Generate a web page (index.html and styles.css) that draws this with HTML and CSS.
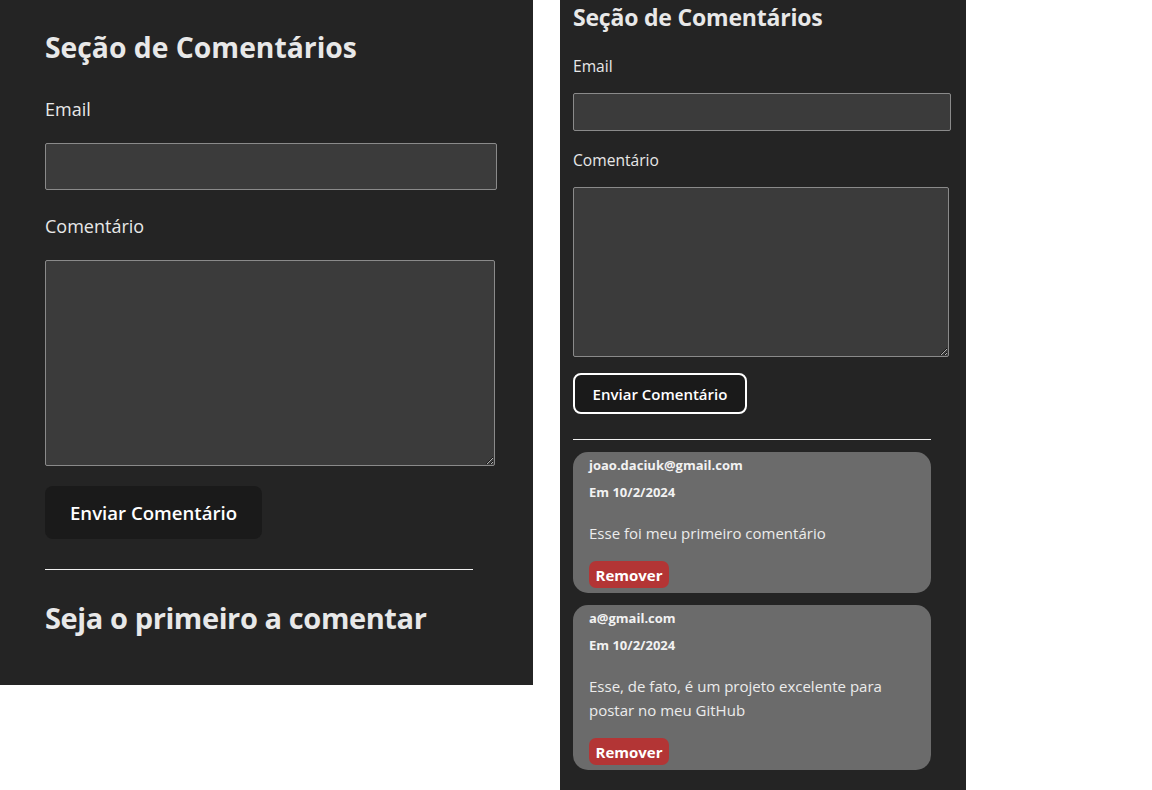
FILE: index.html
```html
<!DOCTYPE html>
<html lang="pt-BR">
<head>
<meta charset="utf-8">
<title>Comentários</title>
<link rel="stylesheet" href="styles.css">
</head>
<body>
<div class="page">
  <section class="panel panel-large">
    <h1 class="title">Seção de Comentários</h1>
    <label class="label label-email">Email</label>
    <input class="field field-email" type="email">
    <label class="label label-comment">Comentário</label>
    <textarea class="field field-text"></textarea>
    <button class="send">Enviar Comentário</button>
    <hr class="rule">
    <h2 class="empty">Seja o primeiro a comentar</h2>
  </section>

  <section class="panel panel-small">
    <h1 class="title">Seção de Comentários</h1>
    <label class="label label-email">Email</label>
    <input class="field field-email" type="email">
    <label class="label label-comment">Comentário</label>
    <textarea class="field field-text"></textarea>
    <button class="send">Enviar Comentário</button>
    <hr class="rule">
    <div class="list">
      <article class="card">
        <div class="author">joao.daciuk@gmail.com</div>
        <div class="date">Em 10/2/2024</div>
        <p class="body">Esse foi meu primeiro comentário</p>
        <button class="remove">Remover</button>
      </article>
      <article class="card">
        <div class="author">a@gmail.com</div>
        <div class="date">Em 10/2/2024</div>
        <p class="body">Esse, de fato, é um projeto excelente para postar no meu GitHub</p>
        <button class="remove">Remover</button>
      </article>
    </div>
  </section>
</div>
</body>
</html>
```

FILE: styles.css
```css
* { box-sizing: border-box; }
html, body { margin: 0; padding: 0; background: #ffffff; }
body {
  font-family: "Open Sans", "Noto Sans", sans-serif;
  color: rgba(255, 255, 255, 0.87);
}
.page {
  display: flex;
  align-items: flex-start;
  gap: 27px;
}
.panel {
  background: #242424;
  display: flex;
  flex-direction: column;
  align-items: flex-start;
}
.title, .empty { margin: 0; font-weight: 700; color: #e8e8e8; }
.label { display: block; color: #e8e8e8; }
.field {
  display: block;
  background: #3b3b3b;
  border: 1px solid #8a8a8a;
  border-radius: 2px;
  color: #fff;
  font: inherit;
  margin: 0;
}
.send {
  font-family: inherit;
  font-weight: 600;
  color: #ffffff;
  background: #1a1a1a;
  border-radius: 8px;
  cursor: pointer;
  padding: 0;
}
.rule { margin: 0; border: 0; border-top: 1px solid #f0f0f0; height: 0; }

/* large panel */
.panel-large {
  width: 533px;
  height: 685px;
  padding: 30px 0 0 45px;
}
.panel-large .title { font-size: 28.3px; line-height: 34px; }
.panel-large .label { font-size: 18px; line-height: 24px; }
.panel-large .label-email { margin-top: 33px; }
.panel-large .field-email { margin-top: 22px; width: 452px; height: 47px; }
.panel-large .label-comment { margin-top: 24px; }
.panel-large .field-text { margin-top: 22px; width: 450px; height: 206px; }
.panel-large .send {
  margin-top: 20px;
  width: 217px;
  height: 53px;
  font-size: 18.6px;
  border: 1px solid transparent;
}
.panel-large .rule { margin-top: 30px; width: 428px; }
.panel-large .empty { margin-top: 30px; font-size: 29px; letter-spacing: -0.4px; line-height: 36px; }

/* small panel */
.panel-small {
  width: 406px;
  min-height: 790px;
  padding: 3px 0 20px 13px;
}
.panel-small .title { font-size: 23px; letter-spacing: -0.2px; line-height: 29px; }
.panel-small .label { font-size: 15.6px; line-height: 20px; }
.panel-small .label-email { margin-top: 24px; }
.panel-small .field-email { margin-top: 17px; width: 378px; height: 38px; }
.panel-small .label-comment { margin-top: 19px; }
.panel-small .field-text { margin-top: 17px; width: 376px; height: 170px; }
.panel-small .send {
  margin-top: 16px;
  width: 174px;
  height: 41px;
  font-size: 15px;
  border: 2px solid #ffffff;
}
.panel-small .rule { margin-top: 25px; width: 358px; }

.list { margin-top: 12px; display: flex; flex-direction: column; gap: 12px; }
.card {
  width: 358px;
  background: #6b6b6b;
  border-radius: 15px;
  padding: 5px 16px 5px 16px;
  display: flex;
  flex-direction: column;
  align-items: flex-start;
}
.author, .date { font-size: 13px; line-height: 16px; font-weight: 700; color: #f2f2f2; }
.date { margin-top: 11px; }
.body { margin: 21px 0 0; font-size: 15px; line-height: 24px; color: #ececec; }
.remove {
  margin-top: 16px;
  width: 80px;
  height: 27px;
  border: 0;
  border-radius: 7px;
  background: #b33535;
  color: #ffffff;
  font-family: inherit;
  font-size: 15px;
  font-weight: 700;
  padding: 0;
}
```
